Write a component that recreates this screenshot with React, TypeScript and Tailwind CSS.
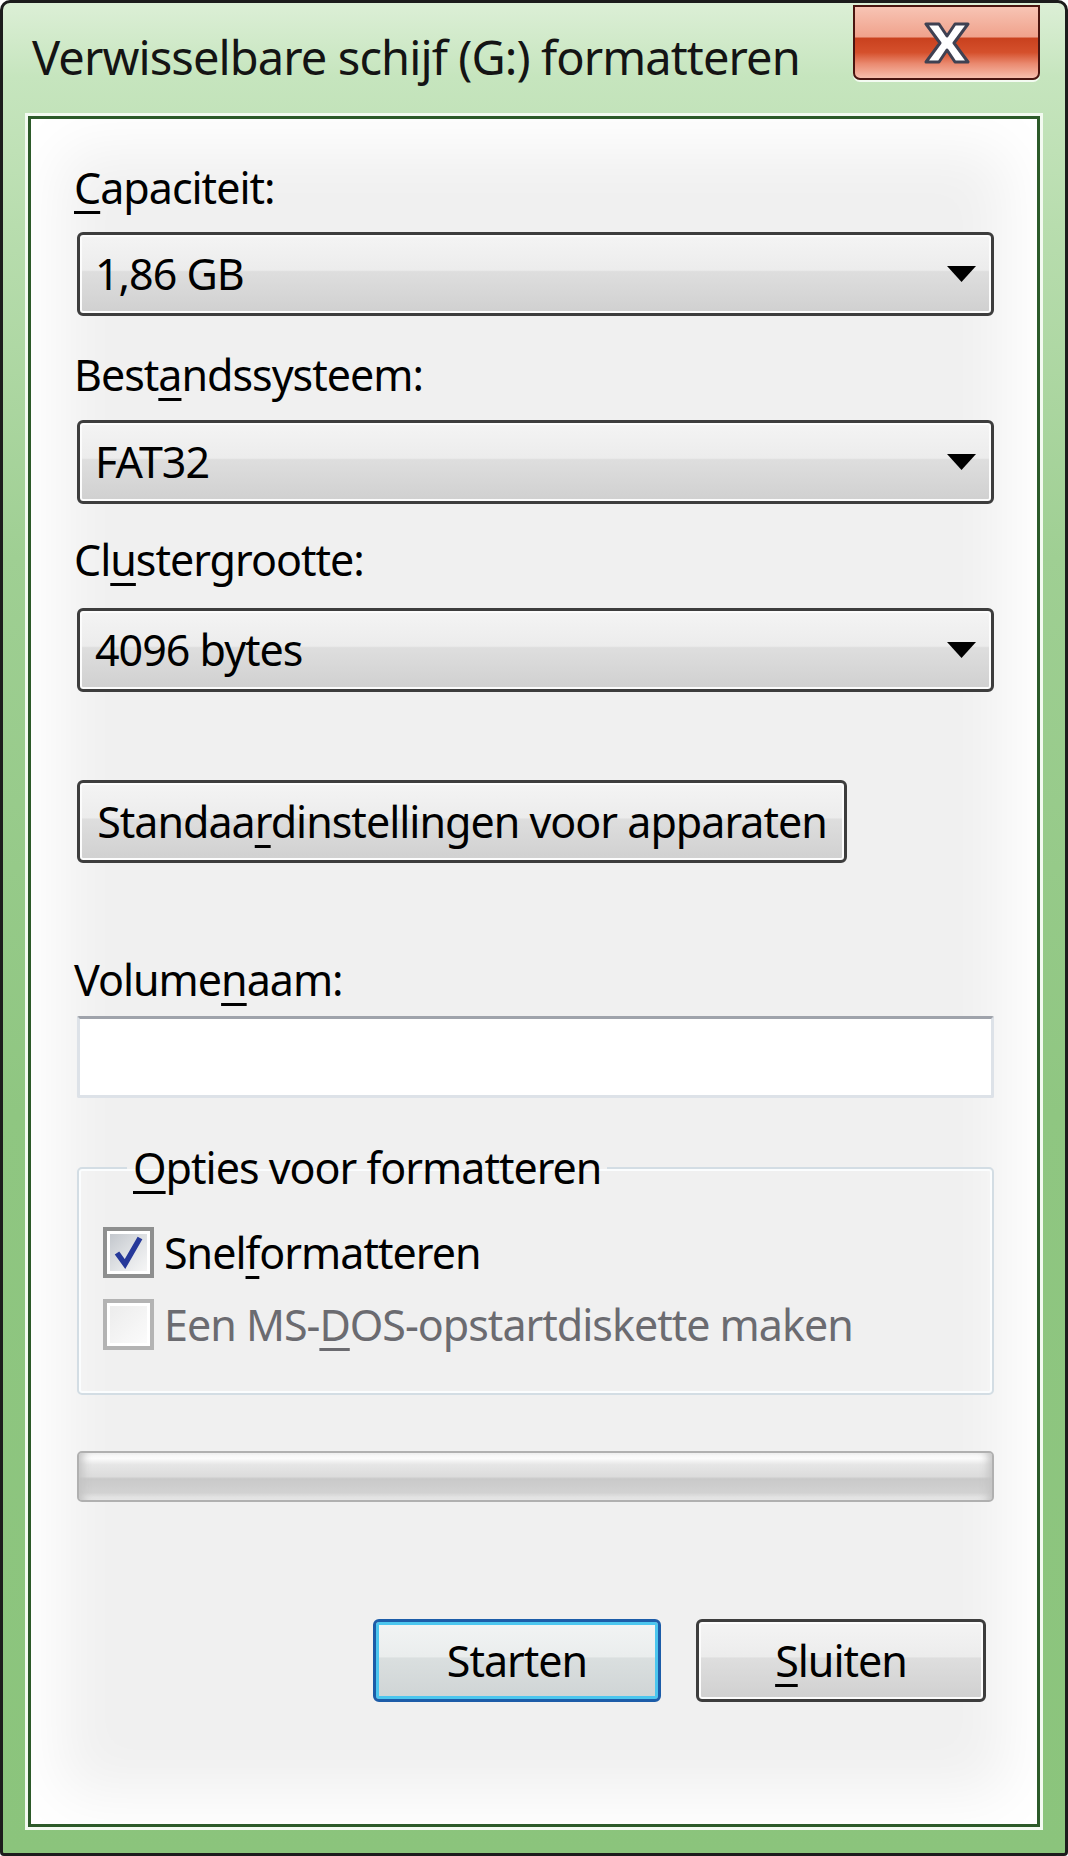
import type { ReactNode } from "react";

function Mn({ children }: { children: ReactNode }) {
  return <span className="underline decoration-[3px] underline-offset-[7px]">{children}</span>;
}

function FieldLabel({ children, className = "" }: { children: ReactNode; className?: string }) {
  return <div className={`-ml-[3px] h-[48px] leading-[48px] ${className}`}>{children}</div>;
}

const buttonFill =
  "bg-[linear-gradient(180deg,#f4f4f4_0%,#ececec_45%,#dedede_47%,#d0d0d0_100%)] shadow-[inset_0_0_0_2px_#fcfcfc]";

function Combo({ value, className = "" }: { value: string; className?: string }) {
  return (
    <div
      className={`flex h-[84px] items-center rounded-[6px] border-[3px] border-[#3d3d3d] pl-[15px] pr-[15px] ${buttonFill} ${className}`}
    >
      <span className="flex-1 leading-[48px]">{value}</span>
      <svg width="29" height="16" viewBox="0 0 29 16">
        <path d="M0 0H29L14.5 16Z" fill="#000" />
      </svg>
    </div>
  );
}

function Checkbox({ checked, disabled }: { checked?: boolean; disabled?: boolean }) {
  return (
    <div
      className={`h-[51px] w-[51px] shrink-0 border-[4px] bg-white p-[3px] ${
        disabled ? "border-[#b3b3b3]" : "border-[#8e8f8f]"
      }`}
    >
      <div
        className={`h-full w-full ${
          disabled
            ? "bg-[linear-gradient(135deg,#ececec_0%,#fbfbfb_100%)]"
            : "bg-[linear-gradient(135deg,#c3c7cd_0%,#e4e6e8_60%,#f6f6f6_100%)]"
        }`}
      >
        {checked && (
          <svg width="37" height="37" viewBox="0 0 37 37">
            <path d="M7 19 L15 30 L30 4" fill="none" stroke="#26399a" strokeWidth="5.5" />
          </svg>
        )}
      </div>
    </div>
  );
}

export default function App() {
  return (
    <div className="h-[1856px] w-[1068px] bg-white font-['Noto_Sans',sans-serif] text-[43px] tracking-[-1px] text-black">
      <div className="flex h-full flex-col rounded-t-[10px] rounded-b-[4px] border-[3px] border-[#1c1c1c] bg-[linear-gradient(180deg,#dcefd6_0%,#c6e5be_4%,#b8ddae_12%,#9fcf93_30%,#8fc681_60%,#8bc47c_100%)] px-[25px] pb-[26px]">
        {/* title bar */}
        <div className="flex h-[113px] shrink-0 items-start justify-between">
          <div className="mt-[30px] pl-[4px] text-[47px] leading-[48px] tracking-[-0.9px] text-[#141414]">
            Verwisselbare schijf (G:) formatteren
          </div>
          <div className="mt-[2px] flex h-[75px] w-[187px] items-center justify-center rounded-b-[7px] border-[2px] border-[#4a1510] bg-[linear-gradient(180deg,#f7c4b4_0%,#f0a28c_42%,#c9411e_44%,#d5502c_64%,#ea8a70_80%,#f7bead_100%)] shadow-[0_2px_0_#f4fbf2]">
            <svg width="46" height="42" viewBox="0 0 46 42">
              <path
                d="M2 2H15L23 14L31 2H44L30 21L44 40H31L23 28L15 40H2L16 21Z"
                fill="#fff"
                stroke="#3f4152"
                strokeWidth="3"
                strokeLinejoin="round"
              />
            </svg>
          </div>
        </div>

        {/* client area */}
        <div className="flex flex-1 flex-col border-[3px] border-[#2c5a29] bg-[#f0f0f0] pl-[46px] pr-[43px] pt-[45px] shadow-[0_0_0_3px_#f3faf1,inset_0_0_60px_30px_#ffffff]">
          <FieldLabel>
            <Mn>C</Mn>apaciteit:
          </FieldLabel>
          <Combo value="1,86 GB" className="mt-[20px]" />

          <FieldLabel className="mt-[35px]">
            Best<Mn>a</Mn>ndssysteem:
          </FieldLabel>
          <Combo value="FAT32" className="mt-[21px]" />

          <FieldLabel className="mt-[32px]">
            Cl<Mn>u</Mn>stergrootte:
          </FieldLabel>
          <Combo value="4096 bytes" className="mt-[24px]" />

          <div
            className={`mt-[88px] flex h-[83px] w-[770px] items-center justify-center rounded-[6px] border-[3px] border-[#3d3d3d] ${buttonFill}`}
          >
            <span className="leading-[48px]">
              Standaa<Mn>r</Mn>dinstellingen voor apparaten
            </span>
          </div>

          <FieldLabel className="mt-[93px]">
            Volume<Mn>n</Mn>aam:
          </FieldLabel>
          <div className="mt-[12px] h-[82px] rounded-[2px] border-[3px] border-[#dde2e8] border-t-[#9fa3ab] bg-white" />

          <fieldset className="mt-[46px] rounded-[5px] border-[2px] border-[#d3dde4] pb-[43px] pl-[24px] shadow-[inset_0_0_0_2px_#fbfdfe]">
            <legend className="ml-[24px] px-[6px] leading-[48px]">
              <Mn>O</Mn>pties voor formatteren
            </legend>
            <div className="mt-[35px] flex h-[51px] items-center gap-[10px]">
              <Checkbox checked />
              <span className="leading-[48px]">
                Snel<Mn>f</Mn>ormatteren
              </span>
            </div>
            <div className="mt-[21px] flex h-[51px] items-center gap-[10px]">
              <Checkbox disabled />
              <span className="leading-[48px] text-[#6b6b70]">
                Een MS-<Mn>D</Mn>OS-opstartdiskette maken
              </span>
            </div>
          </fieldset>

          <div className="mt-[56px] h-[51px] rounded-[5px] border-[2px] border-[#b0b0b0] bg-[linear-gradient(180deg,#ffffff_0%,#fbfbfb_12%,#e6e6e6_25%,#dcdcdc_50%,#c9c9c9_55%,#d2d2d2_85%,#f2f2f2_100%)] shadow-[inset_8px_0_8px_-4px_#c4c4c4,inset_-8px_0_8px_-4px_#c4c4c4]" />

          <div className="mt-[117px] flex justify-end gap-[35px] pr-[8px]">
            <div className="flex h-[83px] w-[288px] items-center justify-center rounded-[6px] border-[3px] border-[#1c5ca8] bg-[linear-gradient(180deg,#f2f4f4_0%,#eaeded_45%,#dadfdf_47%,#cfd4d5_100%)] shadow-[inset_0_0_0_3px_#4cc6ee]">
              <span className="leading-[48px]">Starten</span>
            </div>
            <div
              className={`flex h-[83px] w-[290px] items-center justify-center rounded-[6px] border-[3px] border-[#3d3d3d] ${buttonFill}`}
            >
              <span className="leading-[48px]">
                <Mn>S</Mn>luiten
              </span>
            </div>
          </div>
        </div>
      </div>
    </div>
  );
}
